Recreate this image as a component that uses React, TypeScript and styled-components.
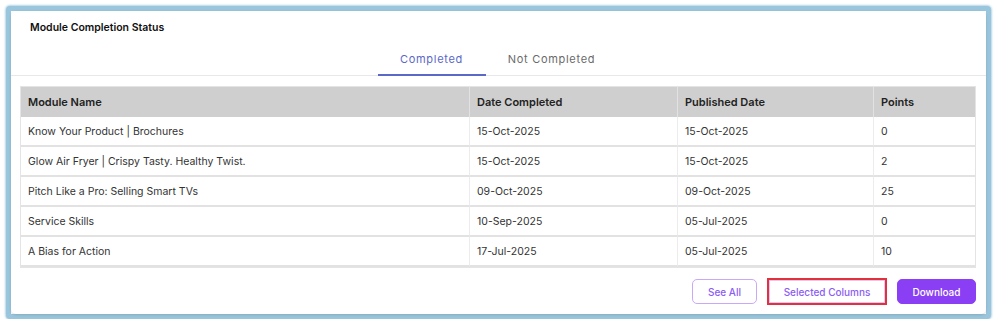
import styled, { createGlobalStyle } from "styled-components";

const Global = createGlobalStyle`
  body {
    margin: 0;
    background: #ffffff;
    font-family: Inter, "DejaVu Sans", sans-serif;
  }
`;

const Frame = styled.div`
  margin: 6px 0 0 6px;
  width: 985px;
  height: 313px;
  box-sizing: border-box;
  border: 5px solid #9ac6dd;
  border-radius: 4px;
  box-shadow: 0 0 2px 1px rgba(150, 195, 220, 0.7);
  background: #ffffff;
`;

const Card = styled.div`
  height: 100%;
  box-sizing: border-box;
  border-radius: 5px;
  box-shadow: 0 1px 3px rgba(0, 0, 0, 0.14);
  display: flex;
  flex-direction: column;
`;

const Title = styled.div`
  padding: 10px 0 0 19px;
  height: 22px;
  font-size: 10.5px;
  font-weight: 600;
  color: #111;
`;

const Tabs = styled.div`
  display: flex;
  justify-content: center;
  padding-right: 14px;
  border-bottom: 1px solid #e8e8ec;
  margin-top: 4px;
`;

const Tab = styled.div<{ $active?: boolean }>`
  width: 108px;
  text-align: center;
  padding: 5px 0 8px;
  font-size: 11px;
  letter-spacing: 0.7px;
  color: ${(p) => (p.$active ? "#5a68c8" : "#6a6a6a")};
  border-bottom: 2px solid ${(p) => (p.$active ? "#5a68c8" : "transparent")};
  margin-bottom: -1px;
  & + & {
    margin-left: 12px;
  }
`;

const Table = styled.div`
  margin: 10px 10px 0 9px;
  border: 1px solid #e4e4e4;
  display: grid;
  grid-template-columns: 448px 208px 196px 1fr;
`;

const Head = styled.div`
  background: #cfcfcf;
  height: 30px;
  display: flex;
  align-items: center;
  padding-left: 7px;
  font-size: 11px;
  font-weight: 600;
  color: #222;
  border-left: 1px solid #e2e2e2;
  &:first-child {
    border-left: none;
  }
`;

const Cell = styled.div<{ $first?: boolean }>`
  height: 28px;
  display: flex;
  align-items: center;
  padding-left: 7px;
  font-size: 10.5px;
  color: #333;
  border-bottom: 2px solid #e2e2e2;
  border-left: ${(p) => (p.$first ? "none" : "1px solid #ececec")};
`;

const Actions = styled.div`
  display: flex;
  justify-content: flex-end;
  gap: 10px;
  margin: 11px 10px 0 0;
`;

const Button = styled.button<{ $variant?: "outline" | "marked" | "solid"; $w: number }>`
  width: ${(p) => p.$w}px;
  height: 25px;
  padding: 0;
  font-family: inherit;
  font-size: 10px;
  font-weight: 500;
  border-radius: 5px;
  cursor: pointer;
  color: ${(p) => (p.$variant === "solid" ? "#ffffff" : "#8b5cf6")};
  background: ${(p) => (p.$variant === "solid" ? "#8a3ff5" : "#ffffff")};
  border: 1px solid ${(p) => (p.$variant === "solid" ? "#8a3ff5" : "#c9a9f7")};
  ${(p) =>
    p.$variant === "marked" &&
    `
    height: 27px;
    margin-top: -1px;
    border-radius: 0;
    border: 2px solid #e2313c;
    box-shadow: inset 0 0 0 1px #ddc9f7;
  `}
`;

const rows = [
  ["Know Your Product | Brochures", "15-Oct-2025", "15-Oct-2025", "0"],
  ["Glow Air Fryer | Crispy Tasty. Healthy Twist.", "15-Oct-2025", "15-Oct-2025", "2"],
  ["Pitch Like a Pro: Selling Smart TVs", "09-Oct-2025", "09-Oct-2025", "25"],
  ["Service Skills", "10-Sep-2025", "05-Jul-2025", "0"],
  ["A Bias for Action", "17-Jul-2025", "05-Jul-2025", "10"],
];

export default function App() {
  return (
    <>
      <Global />
      <Frame>
        <Card>
          <Title>Module Completion Status</Title>
          <Tabs>
            <Tab $active>Completed</Tab>
            <Tab>Not Completed</Tab>
          </Tabs>
          <Table>
            {["Module Name", "Date Completed", "Published Date", "Points"].map((h) => (
              <Head key={h}>{h}</Head>
            ))}
            {rows.map((r, i) =>
              r.map((c, j) => (
                <Cell key={`${i}-${j}`} $first={j === 0}>
                  {c}
                </Cell>
              ))
            )}
          </Table>
          <Actions>
            <Button $variant="outline" $w={65}>See All</Button>
            <Button $variant="marked" $w={120}>Selected Columns</Button>
            <Button $variant="solid" $w={79}>Download</Button>
          </Actions>
        </Card>
      </Frame>
    </>
  );
}
